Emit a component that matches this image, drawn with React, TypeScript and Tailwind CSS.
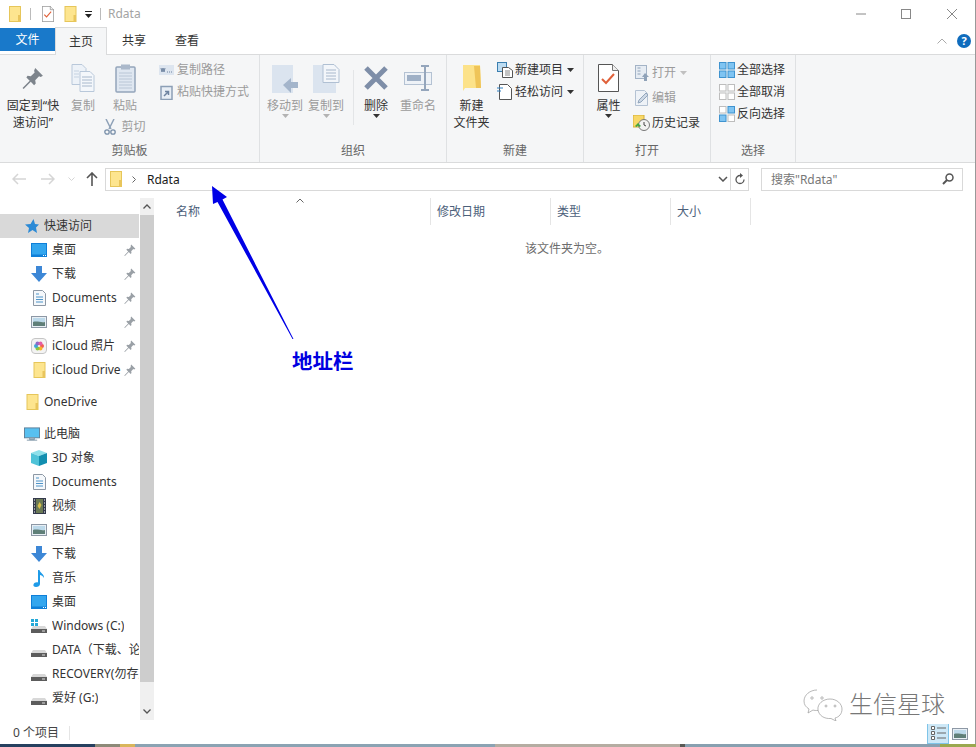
import React from 'react'

const font = '[font-family:"Noto_Sans","Noto_Sans_CJK_SC",sans-serif]'

function Folder({ className = 'h-4 w-3' }: { className?: string }) {
  return (
    <svg className={className} viewBox="0 0 12 16">
      <rect x="0.500" y="0.500" width="11" height="15" fill="#fde58f" stroke="#e6c65a" />
      <rect x="9" y="9" width="2.500" height="6.500" fill="#e9c55c" />
    </svg>
  )
}

function Pin({ small }: { small?: boolean }) {
  return (
    <svg className={small ? 'h-[12px] w-[12px]' : 'h-[22px] w-[22px]'} viewBox="0 0 20 20">
      <path d="M12 1l7 7-2 1-1.500-.5-3.500 3.500.5 3-1.500 1.500-3-3-6.500 6.500-1-1 6.500-6.500-3-3L5 8l3 .5L11.500 5 11 3.500z" fill={small ? '#9aa0a6' : '#7d848c'} />
    </svg>
  )
}

function Caret({ color = '#444' }: { color?: string }) {
  return (
    <svg className="h-[4px] w-[7px]" viewBox="0 0 7 4">
      <path d="M0 0h7L3.500 4z" fill={color} />
    </svg>
  )
}

function CopyIcon({ className = 'h-[28px] w-[24px]' }: { className?: string }) {
  return (
    <svg className={className} viewBox="0 0 24 28">
      <path d="M1 .5h10l4 4v16H1z" fill="#edf2f8" stroke="#b9c8da" />
      <path d="M9 7.500h10l4 4v16H9z" fill="#f4f7fb" stroke="#b9c8da" />
      <path d="M11 13h10M11 16h10M11 19h10M11 22h10" stroke="#a8b8cc" />
      <path d="M3 7h5M3 10h5M3 13h5" stroke="#c5d2e1" />
    </svg>
  )
}

function PasteIcon() {
  return (
    <svg className="h-[29px] w-[21px]" viewBox="0 0 21 29">
      <rect x="1" y="3" width="19" height="25" rx="1" fill="#dfe7f1" stroke="#94a5bb" strokeWidth="1.500" />
      <rect x="6" y="0.500" width="9" height="5" fill="#aab8ca" />
      <path d="M4 9h13M4 12h13M4 15h13M4 18h13M4 21h13M4 24h13" stroke="#b9c6d6" />
    </svg>
  )
}

function MoveIcon({ copy }: { copy?: boolean }) {
  return (
    <svg className="h-[29px] w-[27px]" viewBox="0 0 27 29">
      {copy ? (
        <>
          <rect x="0" y="1" width="23" height="28" fill="#dbe4ef" />
          <path d="M10 .5h11l5 5v13H10z" fill="#f3f6fa" stroke="#b0c0d3" />
          <path d="M13 6h10M13 9h10M13 12h10M13 15h10" stroke="#a8b8cc" />
        </>
      ) : (
        <>
          <rect x="0" y="1" width="21" height="28" fill="#dbe4ef" />
          <path d="M11 21l8-7v4h7v6h-7v5z" fill="#a4b5cb" />
        </>
      )}
    </svg>
  )
}

function SelectIcon({ mode }: { mode: 'all' | 'none' | 'invert' }) {
  const on = 'fill-[#7fc4f2] stroke-[#3f93cf]'
  const off = 'fill-[#ffffff] stroke-[#bdbdbd]'
  const cells = mode === 'all' ? [on, on, on, on] : mode === 'none' ? [off, off, off, off] : [off, on, on, off]
  return (
    <svg className="h-[16px] w-[16px]" viewBox="0 0 16 16">
      <rect x="0.500" y="0.500" width="6.500" height="6.500" className={cells[0]} />
      <rect x="9" y="0.500" width="6.500" height="6.500" className={cells[1]} />
      <rect x="0.500" y="9" width="6.500" height="6.500" className={cells[2]} />
      <rect x="9" y="9" width="6.500" height="6.500" className={cells[3]} />
    </svg>
  )
}

function PropsIcon({ className = 'h-[28px] w-[21px]' }: { className?: string }) {
  return (
    <svg className={className} viewBox="0 0 21 28">
      <path d="M.5.5h14l6 6v21H.5z" fill="#fff" stroke="#555" />
      <path d="M14.500.5v6h6" fill="#eee" stroke="#777" />
      <path d="M4 15l4 4 8-9" fill="none" stroke="#e0613a" strokeWidth="2" />
    </svg>
  )
}

function Desktop() {
  return (
    <svg className="h-[14px] w-[16px]" viewBox="0 0 16 14">
      <rect width="16" height="14" fill="#0f7fd8" />
      <rect x="1" y="1" width="14" height="10.500" fill="#33a6ee" />
      <path d="M12 12.500h1M14 12.500h1" stroke="#fff" />
    </svg>
  )
}

function Download() {
  return (
    <svg className="h-[16px] w-[16px]" viewBox="0 0 16 16">
      <path d="M5 0h6v7h5l-8 9-8-9h5z" fill="#3d87d6" />
    </svg>
  )
}

function Doc() {
  return (
    <svg className="h-[16px] w-[13px]" viewBox="0 0 13 16">
      <path d="M.5.5h9l3 3v12H.5z" fill="#f5f8fb" stroke="#8d98a5" />
      <path d="M3 4h3M3 7h7M3 9.500h7M3 12h7" stroke="#4f94c8" />
    </svg>
  )
}

function Picture() {
  return (
    <svg className="h-[12px] w-[16px]" viewBox="0 0 16 12">
      <rect x="0.500" y="0.500" width="15" height="11" fill="#e8eff5" stroke="#8d98a5" />
      <path d="M2 2h12v4H2z" fill="#bcd9ea" />
      <path d="M2 6c4-1.500 8 1 12 0v4H2z" fill="#5f7f78" />
    </svg>
  )
}

function Photos() {
  const petals = ['#f25c54', '#f7b32b', '#8cc63f', '#3fa7d6', '#8e6ac8', '#e35fa5']
  return (
    <svg className="h-[16px] w-[16px]" viewBox="0 0 16 16">
      <rect x="0.500" y="0.500" width="15" height="15" rx="3.500" fill="#f3f3f3" stroke="#c5c5c5" />
      {petals.map((c, i) => (
        <circle key={c} cx={8 + 3 * Math.cos((i * Math.PI) / 3)} cy={8 + 3 * Math.sin((i * Math.PI) / 3)} r="2" fill={c} />
      ))}
    </svg>
  )
}

function Computer() {
  return (
    <svg className="h-[15px] w-[17px]" viewBox="0 0 17 15">
      <rect x="0.500" y="0.500" width="16" height="10.500" fill="#58c0f0" stroke="#5c7f98" />
      <path d="M6 11h5v2H6zM3 13.500h11" stroke="#7f96a8" fill="#a8bccb" />
    </svg>
  )
}

function Cube() {
  return (
    <svg className="h-[16px] w-[16px]" viewBox="0 0 16 16">
      <path d="M8 0l8 3-8 3-8-3z" fill="#8ee0ea" />
      <path d="M0 3l8 3v10l-8-3z" fill="#4fc3d8" />
      <path d="M16 3l-8 3v10l8-3z" fill="#128fb0" />
    </svg>
  )
}

function Video() {
  return (
    <svg className="h-[16px] w-[13px]" viewBox="0 0 13 16">
      <rect width="13" height="16" fill="#33394a" />
      <rect x="3" y="1" width="7" height="14" fill="#6b7a55" />
      <path d="M6.500 4l2 3-2 4-2-3z" fill="#d9c04d" />
      <path d="M1 2h1M1 5h1M1 8h1M1 11h1M1 14h1M11 2h1M11 5h1M11 8h1M11 11h1M11 14h1" stroke="#fff" />
    </svg>
  )
}

function Music() {
  return (
    <svg className="h-[17px] w-[12px]" viewBox="0 0 12 17">
      <path d="M5 0h1.500c.5 3 5 4 4.500 8-1-2-3-3-4-3v9c0 2-2 3-4 3s-3-1-2.500-2.500S3 12 5 12.500z" fill="#1e9be8" />
    </svg>
  )
}

function Drive({ win }: { win?: boolean }) {
  return (
    <svg className="h-[14px] w-[16px]" viewBox="0 0 16 14">
      {win && <path d="M0 0h3v3H0zM4 0h3v3H4zM0 4h3v3H0zM4 4h3v3H4z" fill="#25a9d8" />}
      <path d="M2 7h12l2 3v4H0v-4z" fill="#d8d8d8" />
      <rect y="10" width="16" height="4" fill="#5c5c5c" />
      <rect x="11" y="11.500" width="3" height="1" fill="#ddd" />
    </svg>
  )
}

function NavRow({ icon, label, pin, top, active, className = '' }: { icon: React.ReactNode; label: string; pin?: boolean; top?: boolean; active?: boolean; className?: string }) {
  return (
    <div className={`flex h-6 w-[139px] shrink-0 items-center whitespace-nowrap text-[12px] text-[#333] ${top ? 'pl-6' : 'pl-[31px]'} ${active ? 'bg-[#d9d9d9]' : ''} ${className}`}>
      <span className="flex w-[16px] shrink-0 items-center justify-center">{icon}</span>
      <span className={`${top ? 'ml-1' : 'ml-[5px]'} min-w-0 overflow-hidden`}>{label}</span>
      {pin && (
        <span className="ml-auto shrink-0 pr-[3px] pl-[2px]">
          <Pin small />
        </span>
      )}
    </div>
  )
}

function RibbonGroup({ label, width, children }: { label: string; width: string; children: React.ReactNode }) {
  return (
    <div className={`flex h-full shrink-0 flex-col border-r border-[#dfe1e3] ${width}`}>
      <div className="flex min-h-0 flex-1">{children}</div>
      <div className="h-[20px] text-center text-[12px] leading-[17px] text-[#666]">{label}</div>
    </div>
  )
}

function BigButton({ icon, lines, width, disabled, caret }: { icon: React.ReactNode; lines: string[]; width: string; disabled?: boolean; caret?: string }) {
  return (
    <div className={`flex shrink-0 flex-col items-center pt-[7px] text-[12px] leading-[17px] ${width} ${disabled ? 'text-[#9b9b9b]' : 'text-[#333]'}`}>
      <div className="mb-[3px] flex h-[32px] items-center justify-center">{icon}</div>
      {lines.map(l => (
        <div key={l} className="whitespace-nowrap">
          {l}
        </div>
      ))}
      {caret && <Caret color={caret} />}
    </div>
  )
}

function SmallButton({ icon, label, disabled, caret, className = 'h-[22px]' }: { icon: React.ReactNode; label: string; disabled?: boolean; caret?: string; className?: string }) {
  return (
    <div className={`flex items-center whitespace-nowrap text-[12px] ${className} ${disabled ? 'text-[#9b9b9b]' : 'text-[#333]'}`}>
      <span className="flex w-[17px] shrink-0 items-center justify-center">{icon}</span>
      <span className="ml-[2px]">{label}</span>
      {caret && (
        <span className="ml-[4px] flex items-center">
          <Caret color={caret} />
        </span>
      )}
    </div>
  )
}

function HeaderCell({ label, width }: { label: string; width: string }) {
  return <div className={`flex h-full shrink-0 items-center border-r border-[#e5e5e5] pl-[6px] text-[12px] text-[#4c607a] ${width}`}>{label}</div>
}

function TitleBar() {
  return (
    <div className="flex h-[27px] shrink-0 items-center bg-white">
      <div className="ml-[9px]">
        <Folder className="h-[16px] w-[12px]" />
      </div>
      <div className="ml-[9px] h-[12px] w-px bg-[#bbb]" />
      <div className="ml-[11px]">
        <PropsIcon className="h-[16px] w-[12px]" />
      </div>
      <div className="ml-[10px]">
        <Folder className="h-[16px] w-[13px]" />
      </div>
      <svg className="ml-[8px] mt-[2px] h-[7px] w-[7px]" viewBox="0 0 7 7">
        <path d="M0 0h7v1H0zM0 3h7L3.500 7z" fill="#222" />
      </svg>
      <div className="ml-[8px] h-[12px] w-px bg-[#bbb]" />
      <div className="ml-[7px] text-[12px] text-[#a3a3a3]">Rdata</div>
      <div className="ml-auto flex items-center">
        <svg className="h-[10px] w-[10px]" viewBox="0 0 10 10">
          <path d="M0 5h10" stroke="#888" />
        </svg>
        <svg className="ml-[35px] h-[10px] w-[10px]" viewBox="0 0 10 10">
          <rect x="0.500" y="0.500" width="9" height="9" fill="none" stroke="#888" />
        </svg>
        <svg className="ml-[36px] mr-[18px] h-[10px] w-[10px]" viewBox="0 0 10 10">
          <path d="M0 0l10 10M10 0L0 10" stroke="#888" />
        </svg>
      </div>
    </div>
  )
}

function TabRow() {
  return (
    <div className="flex h-[27px] shrink-0 bg-white text-[12px] text-[#333]">
      <div className="mt-px flex h-[23px] w-[55px] items-center justify-center bg-[#1979ca] text-white">文件</div>
      <div className="z-10 flex h-[28px] w-[52px] items-center justify-center border-x border-t border-[#dadbdc] bg-[#f5f6f7]">主页</div>
      <div className="ml-[15px] flex h-[27px] items-center">共享</div>
      <div className="ml-[29px] flex h-[27px] items-center">查看</div>
      <div className="ml-auto flex items-center">
        <svg className="h-[6px] w-[10px]" viewBox="0 0 10 6">
          <path d="M.5 5.500l4.500-4.500 4.500 4.500" fill="none" stroke="#aaa" />
        </svg>
        <div className="ml-[10px] mr-[4px] flex h-[14px] w-[14px] items-center justify-center rounded-full bg-[#0f6cbd] text-[11px] font-bold leading-none text-white">?</div>
      </div>
    </div>
  )
}

function Ribbon() {
  return (
    <div className="flex h-[109px] shrink-0 border-y border-[#dadbdc] bg-[#f5f6f7]">
      <RibbonGroup label="剪贴板" width="w-[260px]">
        <BigButton width="w-[66px]" icon={<Pin />} lines={['固定到“快', '速访问”']} />
        <BigButton width="w-[34px]" disabled icon={<CopyIcon />} lines={['复制']} />
        <div className="ml-[3px] flex w-[44px] shrink-0 flex-col items-center pt-[7px] text-[12px] leading-[17px] text-[#9b9b9b]">
          <div className="mb-[3px] flex h-[32px] items-center">
            <PasteIcon />
          </div>
          <div>粘贴</div>
          <div className="mt-[4px] flex items-center gap-[5px] whitespace-nowrap">
            <svg className="h-[16px] w-[12px]" viewBox="0 0 12 16">
              <path d="M2 0l5 10M10 0L5 10" stroke="#8fa2b8" strokeWidth="1.500" />
              <circle cx="3" cy="13" r="2.200" fill="none" stroke="#7a90aa" strokeWidth="1.300" />
              <circle cx="9" cy="13" r="2.200" fill="none" stroke="#7a90aa" strokeWidth="1.300" />
            </svg>
            剪切
          </div>
        </div>
        <div className="ml-[11px] pt-[4px]">
          <SmallButton
            disabled
            label="复制路径"
            icon={
              <svg className="h-[10px] w-[15px]" viewBox="0 0 15 10">
                <rect width="15" height="10" fill="#dde5ef" />
                <path d="M2 3l1 4 1-4 1 4 1-4M8 7h1M10 7h1M12 7h1" stroke="#6e83a0" fill="none" />
              </svg>
            }
          />
          <SmallButton
            disabled
            label="粘贴快捷方式"
            icon={
              <svg className="h-[15px] w-[13px]" viewBox="0 0 13 15">
                <rect x="1" y="1.500" width="11" height="13" fill="#e8eef5" stroke="#8c9fb6" strokeWidth="1.500" />
                <path d="M4 11l4-4M5 6.500h3.500V10" fill="none" stroke="#6e83a0" strokeWidth="1.500" />
              </svg>
            }
          />
        </div>
      </RibbonGroup>
      <RibbonGroup label="组织" width="w-[187px]">
        <div className="flex w-[93px] shrink-0">
          <BigButton width="w-[50px]" disabled caret="#b3b3b3" icon={<MoveIcon />} lines={['移动到']} />
          <BigButton width="w-[32px]" disabled caret="#b3b3b3" icon={<MoveIcon copy />} lines={['复制到']} />
        </div>
        <div className="mt-[15px] h-[55px] w-px bg-[#e3e5e7]" />
        <BigButton
          width="w-[44px]"
          caret="#333"
          icon={
            <svg className="h-[26px] w-[26px]" viewBox="0 0 26 26">
              <path d="M3 3l20 20M23 3L3 23" stroke="#7e8ea8" strokeWidth="5" />
            </svg>
          }
          lines={['删除']}
        />
        <BigButton
          width="w-[40px]"
          disabled
          icon={
            <svg className="h-[26px] w-[28px]" viewBox="0 0 28 26">
              <rect x="0.500" y="7.500" width="27" height="12" fill="#eef2f7" stroke="#b4c2d3" />
              <rect x="3" y="10" width="14" height="6" fill="#9fb0c6" />
              <path d="M17 1h8M21 1v24M17 25h8" stroke="#95a6bc" strokeWidth="2" />
            </svg>
          }
          lines={['重命名']}
        />
      </RibbonGroup>
      <RibbonGroup label="新建" width="w-[137px]">
        <BigButton
          width="w-[49px]"
          icon={
            <svg className="h-[28px] w-[20px]" viewBox="0 0 20 28">
              <path d="M1 1h17l1 23H3l-2 3z" fill="#fce28a" />
              <path d="M12 2h6l1 22h-5z" fill="#efc458" />
            </svg>
          }
          lines={['新建', '文件夹']}
        />
        <div className="pt-[4px]">
          <SmallButton
            label="新建项目"
            caret="#333"
            icon={
              <svg className="h-[16px] w-[16px]" viewBox="0 0 16 16">
                <rect x="0.500" y="0.500" width="9" height="9" fill="#bcdcf2" stroke="#3b7fb0" />
                <path d="M5.500 5.500h6l4 3v7h-10z" fill="#fff" stroke="#555" />
                <path d="M8 9h5M8 11h5M8 13h5" stroke="#888" />
              </svg>
            }
          />
          <SmallButton
            label="轻松访问"
            caret="#333"
            icon={
              <svg className="h-[16px] w-[15px]" viewBox="0 0 15 16">
                <path d="M2.500.5h8l4 4v11h-12z" fill="#fff" stroke="#555" />
                <path d="M0 4h6M0 7h4" stroke="#2f7fc0" />
              </svg>
            }
          />
        </div>
      </RibbonGroup>
      <RibbonGroup label="打开" width="w-[127px]">
        <BigButton width="w-[49px]" caret="#333" icon={<PropsIcon />} lines={['属性']} />
        <div className="pt-[5px]">
          <SmallButton
            disabled
            className="h-[25px]"
            label="打开"
            caret="#c0c0c0"
            icon={
              <svg className="h-[16px] w-[14px]" viewBox="0 0 14 16">
                <rect x="0.500" y="0.500" width="11" height="13" fill="#e6ecf3" stroke="#a3b3c6" />
                <path d="M2.500 3h3M2.500 6h3M2.500 9h3" stroke="#8fa2b8" />
                <path d="M10 8l4 4h-2v4H9v-4H7z" fill="#8fa2b8" />
              </svg>
            }
          />
          <SmallButton
            disabled
            className="h-[25px]"
            label="编辑"
            icon={
              <svg className="h-[16px] w-[14px]" viewBox="0 0 14 16">
                <path d="M.5.5h9l3 3v12H.5z" fill="#eef2f7" stroke="#b4c2d3" />
                <path d="M3 13l1-3 7-7 2 2-7 7z" fill="#cdd8e5" stroke="#93a6bc" />
              </svg>
            }
          />
          <SmallButton
            className="h-[25px]"
            label="历史记录"
            icon={
              <svg className="h-[16px] w-[17px]" viewBox="0 0 17 16">
                <rect width="11" height="12" fill="#f8d868" stroke="#d3ae38" />
                <circle cx="11" cy="10" r="5.500" fill="#f2f2f2" stroke="#777" />
                <path d="M11 7v3l2 1" fill="none" stroke="#444" />
                <path d="M2 11l3-3 3 3-1.500 1-1.500-1.500L3.500 12z" fill="#3fa63f" />
              </svg>
            }
          />
        </div>
      </RibbonGroup>
      <RibbonGroup label="选择" width="w-[85px]">
        <div className="pl-[7px] pt-[4px]">
          <SmallButton label="全部选择" icon={<SelectIcon mode="all" />} />
          <SmallButton label="全部取消" icon={<SelectIcon mode="none" />} />
          <SmallButton label="反向选择" icon={<SelectIcon mode="invert" />} />
        </div>
      </RibbonGroup>
    </div>
  )
}

function AddressRow() {
  return (
    <div className="flex h-[32px] shrink-0 items-center bg-white">
      <div className="flex w-[105px] shrink-0 items-center pl-[12px]">
        <svg className="h-[12px] w-[14px]" viewBox="0 0 14 12">
          <path d="M6 1L1 6l5 5M1 6h13" fill="none" stroke="#d5d5d5" strokeWidth="1.500" />
        </svg>
        <svg className="ml-[15px] h-[12px] w-[14px]" viewBox="0 0 14 12">
          <path d="M8 1l5 5-5 5M13 6H0" fill="none" stroke="#d5d5d5" strokeWidth="1.500" />
        </svg>
        <svg className="ml-[13px] h-[4px] w-[7px]" viewBox="0 0 7 4">
          <path d="M.5.5l3 3 3-3" fill="none" stroke="#d5d5d5" />
        </svg>
        <svg className="ml-[11px] h-[14px] w-[12px]" viewBox="0 0 12 14">
          <path d="M1 6l5-5 5 5M6 1v13" fill="none" stroke="#555" strokeWidth="1.600" />
        </svg>
      </div>
      <div className="flex h-[23px] w-[644px] shrink-0 items-center border border-[#d9d9d9] pl-[4px] text-[12px] text-[#1a1a1a]">
        <Folder className="h-[16px] w-[12px]" />
        <svg className="ml-[10px] h-[7px] w-[4px]" viewBox="0 0 4 7">
          <path d="M.5.5l3 3-3 3" fill="none" stroke="#666" />
        </svg>
        <span className="ml-[11px] pt-px">Rdata</span>
        <svg className="ml-auto h-[6px] w-[10px]" viewBox="0 0 10 6">
          <path d="M1 1l4 4 4-4" fill="none" stroke="#555" strokeWidth="1.500" />
        </svg>
        <div className="ml-[2px] flex h-full w-[18px] items-center justify-center border-l border-[#d9d9d9]">
          <svg className="h-[12px] w-[10px]" viewBox="0 0 10 12">
            <path d="M5 2.500a4 4 0 1 0 4 4" fill="none" stroke="#555" strokeWidth="1.300" />
            <path d="M5 0l3 2.500L5 5z" fill="#555" />
          </svg>
        </div>
      </div>
      <div className="ml-[12px] flex h-[23px] w-[202px] shrink-0 items-center border border-[#d9d9d9] pl-[9px] pr-[8px] text-[12px] text-[#777]">
        <span className="pt-px">搜索"Rdata"</span>
        <svg className="ml-auto h-[12px] w-[12px]" viewBox="0 0 12 12">
          <circle cx="7.500" cy="4.500" r="3.500" fill="none" stroke="#555" strokeWidth="1.500" />
          <path d="M5 7l-4 4" stroke="#555" strokeWidth="2" />
        </svg>
      </div>
    </div>
  )
}

function Sidebar() {
  return (
    <div className="flex h-full w-[154px] shrink-0">
      <div className="flex w-[140px] shrink-0 flex-col overflow-hidden pt-[19px]">
        <NavRow
          top
          active
          label="快速访问"
          icon={
            <svg className="h-[14px] w-[14px]" viewBox="0 0 14 14">
              <path d="M8.500 0l1.500 5 4 .5-3 3 1 5.500-4.500-3L3 14l1-5-4-3.500 5.500-.5z" fill="#2b8ad6" />
            </svg>
          }
        />
        <NavRow pin label="桌面" icon={<Desktop />} />
        <NavRow pin label="下载" icon={<Download />} />
        <NavRow pin label="Documents" icon={<Doc />} />
        <NavRow pin label="图片" icon={<Picture />} />
        <NavRow pin label="iCloud 照片" icon={<Photos />} />
        <NavRow pin label="iCloud Drive" icon={<Folder className="h-[16px] w-[13px]" />} />
        <NavRow top className="mt-2" label="OneDrive" icon={<Folder className="h-[16px] w-[13px]" />} />
        <NavRow top className="mt-2" label="此电脑" icon={<Computer />} />
        <NavRow label="3D 对象" icon={<Cube />} />
        <NavRow label="Documents" icon={<Doc />} />
        <NavRow label="视频" icon={<Video />} />
        <NavRow label="图片" icon={<Picture />} />
        <NavRow label="下载" icon={<Download />} />
        <NavRow label="音乐" icon={<Music />} />
        <NavRow label="桌面" icon={<Desktop />} />
        <NavRow label="Windows (C:)" icon={<Drive win />} />
        <NavRow label="DATA（下载、论文）" icon={<Drive />} />
        <NavRow label="RECOVERY(勿存放)" icon={<Drive />} />
        <NavRow label="爱好 (G:)" icon={<Drive />} />
      </div>
      <div className="flex w-[14px] shrink-0 flex-col pb-[4px] pt-[3px]">
        <div className="flex h-[17px] items-center justify-center bg-[#f0f0f0]">
          <svg className="h-[5px] w-[8px]" viewBox="0 0 8 5">
            <path d="M.5 4.500L4 1l3.500 3.500" fill="none" stroke="#555" strokeWidth="1.300" />
          </svg>
        </div>
        <div className="h-[467px] bg-[#cdcdcd]" />
        <div className="flex-1 bg-[#f0f0f0]" />
        <div className="flex h-[17px] items-center justify-center bg-[#f0f0f0]">
          <svg className="h-[5px] w-[8px]" viewBox="0 0 8 5">
            <path d="M.5.5L4 4 7.500.5" fill="none" stroke="#555" strokeWidth="1.300" />
          </svg>
        </div>
      </div>
    </div>
  )
}

function FileList() {
  return (
    <div className="relative min-w-0 flex-1 bg-white">
      <div className="flex h-[30px] pt-[3px]">
        <div className="w-[16px] shrink-0" />
        <HeaderCell label="名称" width="w-[261px]" />
        <HeaderCell label="修改日期" width="w-[120px]" />
        <HeaderCell label="类型" width="w-[120px]" />
        <HeaderCell label="大小" width="w-[80px]" />
      </div>
      <svg className="absolute left-[142px] top-[3px] h-[5px] w-[8px]" viewBox="0 0 8 5">
        <path d="M.5 4.500L4 1l3.500 3.500" fill="none" stroke="#666" />
      </svg>
      <div className="mt-[15px] pl-[371px] text-[12px] leading-[17px] text-[#6d6d6d]">该文件夹为空。</div>
    </div>
  )
}

function StatusBar() {
  return (
    <div className="flex h-[20px] shrink-0 items-center bg-white pb-[3px] text-[12px] text-[#444]">
      <span className="ml-[13px]">0 个项目</span>
      <div className="ml-[10px] h-[14px] w-px bg-[#e5e5e5]" />
      <div className="ml-auto flex h-[17px] items-end">
        <div className="-mb-[3px] flex h-[23px] w-[22px] shrink-0 items-center justify-center border border-[#7fc4e8] bg-[#cde8f7]">
          <svg className="h-[14px] w-[15px]" viewBox="0 0 15 14">
            <path d="M.5.5h3v3h-3zM.5 5.500h3v3h-3zM.5 10.500h3v3h-3z" fill="#fff" stroke="#666" />
            <path d="M6 2h9M6 7h9M6 12h9" stroke="#666" />
          </svg>
        </div>
        <div className="mb-[1px] ml-[3px] mr-[7px] flex w-[16px] justify-center">
          <Picture />
        </div>
      </div>
    </div>
  )
}

// the desktop wallpaper showing under the window
function WallpaperStrip() {
  return (
    <div className="flex h-[3px] w-[976px] shrink-0">
      <div className="w-[95px] bg-[#26405f]" />
      <div className="w-[25px] bg-[#8d8a78]" />
      <div className="w-[15px] bg-[#d9b65c]" />
      <div className="w-[360px] bg-[#8ba3b3]" />
      <div className="w-[185px] bg-[#b5ada2]" />
      <div className="w-[5px] bg-[#5a5a55]" />
      <div className="w-[255px] bg-[#88a0b0]" />
      <div className="flex-1 bg-[#9aa84f]" />
    </div>
  )
}

function Annotation() {
  return (
    <>
      <svg className="pointer-events-none absolute left-[205px] top-[180px] h-[165px] w-[95px]" viewBox="205 180 95 165">
        <path d="M212 186L227 197L222.500 199.500L293.500 339L292.500 339L217.500 202L213 204z" fill="#0000e6" />
      </svg>
      <div className="absolute left-[292px] top-[347px] text-[20.500px] font-bold leading-[28px] text-[#0000e0]">地址栏</div>
      <svg className="absolute left-[802px] top-[689px] h-[32px] w-[44px]" viewBox="0 0 44 32" fill="#fff" stroke="#999" strokeWidth="0.700">
        <path d="M15 1C8 1 2 6 2 12c0 4 2 6 5 8l-1 4 5-3c1 .5 3 .5 5 .5" />
        <path d="M16 21c-1-6 5-11 12-11s12 5 12 10-3 8-7 9l1 3-5-2.500c-7 .5-12-3-13-8.500z" />
        <circle cx="10" cy="9" r="1.200" />
        <circle cx="20" cy="9" r="1.200" />
        <circle cx="24" cy="17" r="1" />
        <circle cx="33" cy="17" r="1" />
      </svg>
      <div className="absolute left-[849px] top-[688px] text-[24px] font-light leading-[32px] text-[#777]">生信星球</div>
    </>
  )
}

export default function App() {
  return (
    <div className={`relative flex h-[747px] w-[976px] flex-col overflow-hidden bg-white ${font}`}>
      <div className="flex min-h-0 flex-1 flex-col border-r border-[#999]">
        <TitleBar />
        <TabRow />
        <Ribbon />
        <AddressRow />
        <div className="flex min-h-0 flex-1">
          <Sidebar />
          <FileList />
        </div>
        <StatusBar />
      </div>
      <WallpaperStrip />
      <Annotation />
    </div>
  )
}
